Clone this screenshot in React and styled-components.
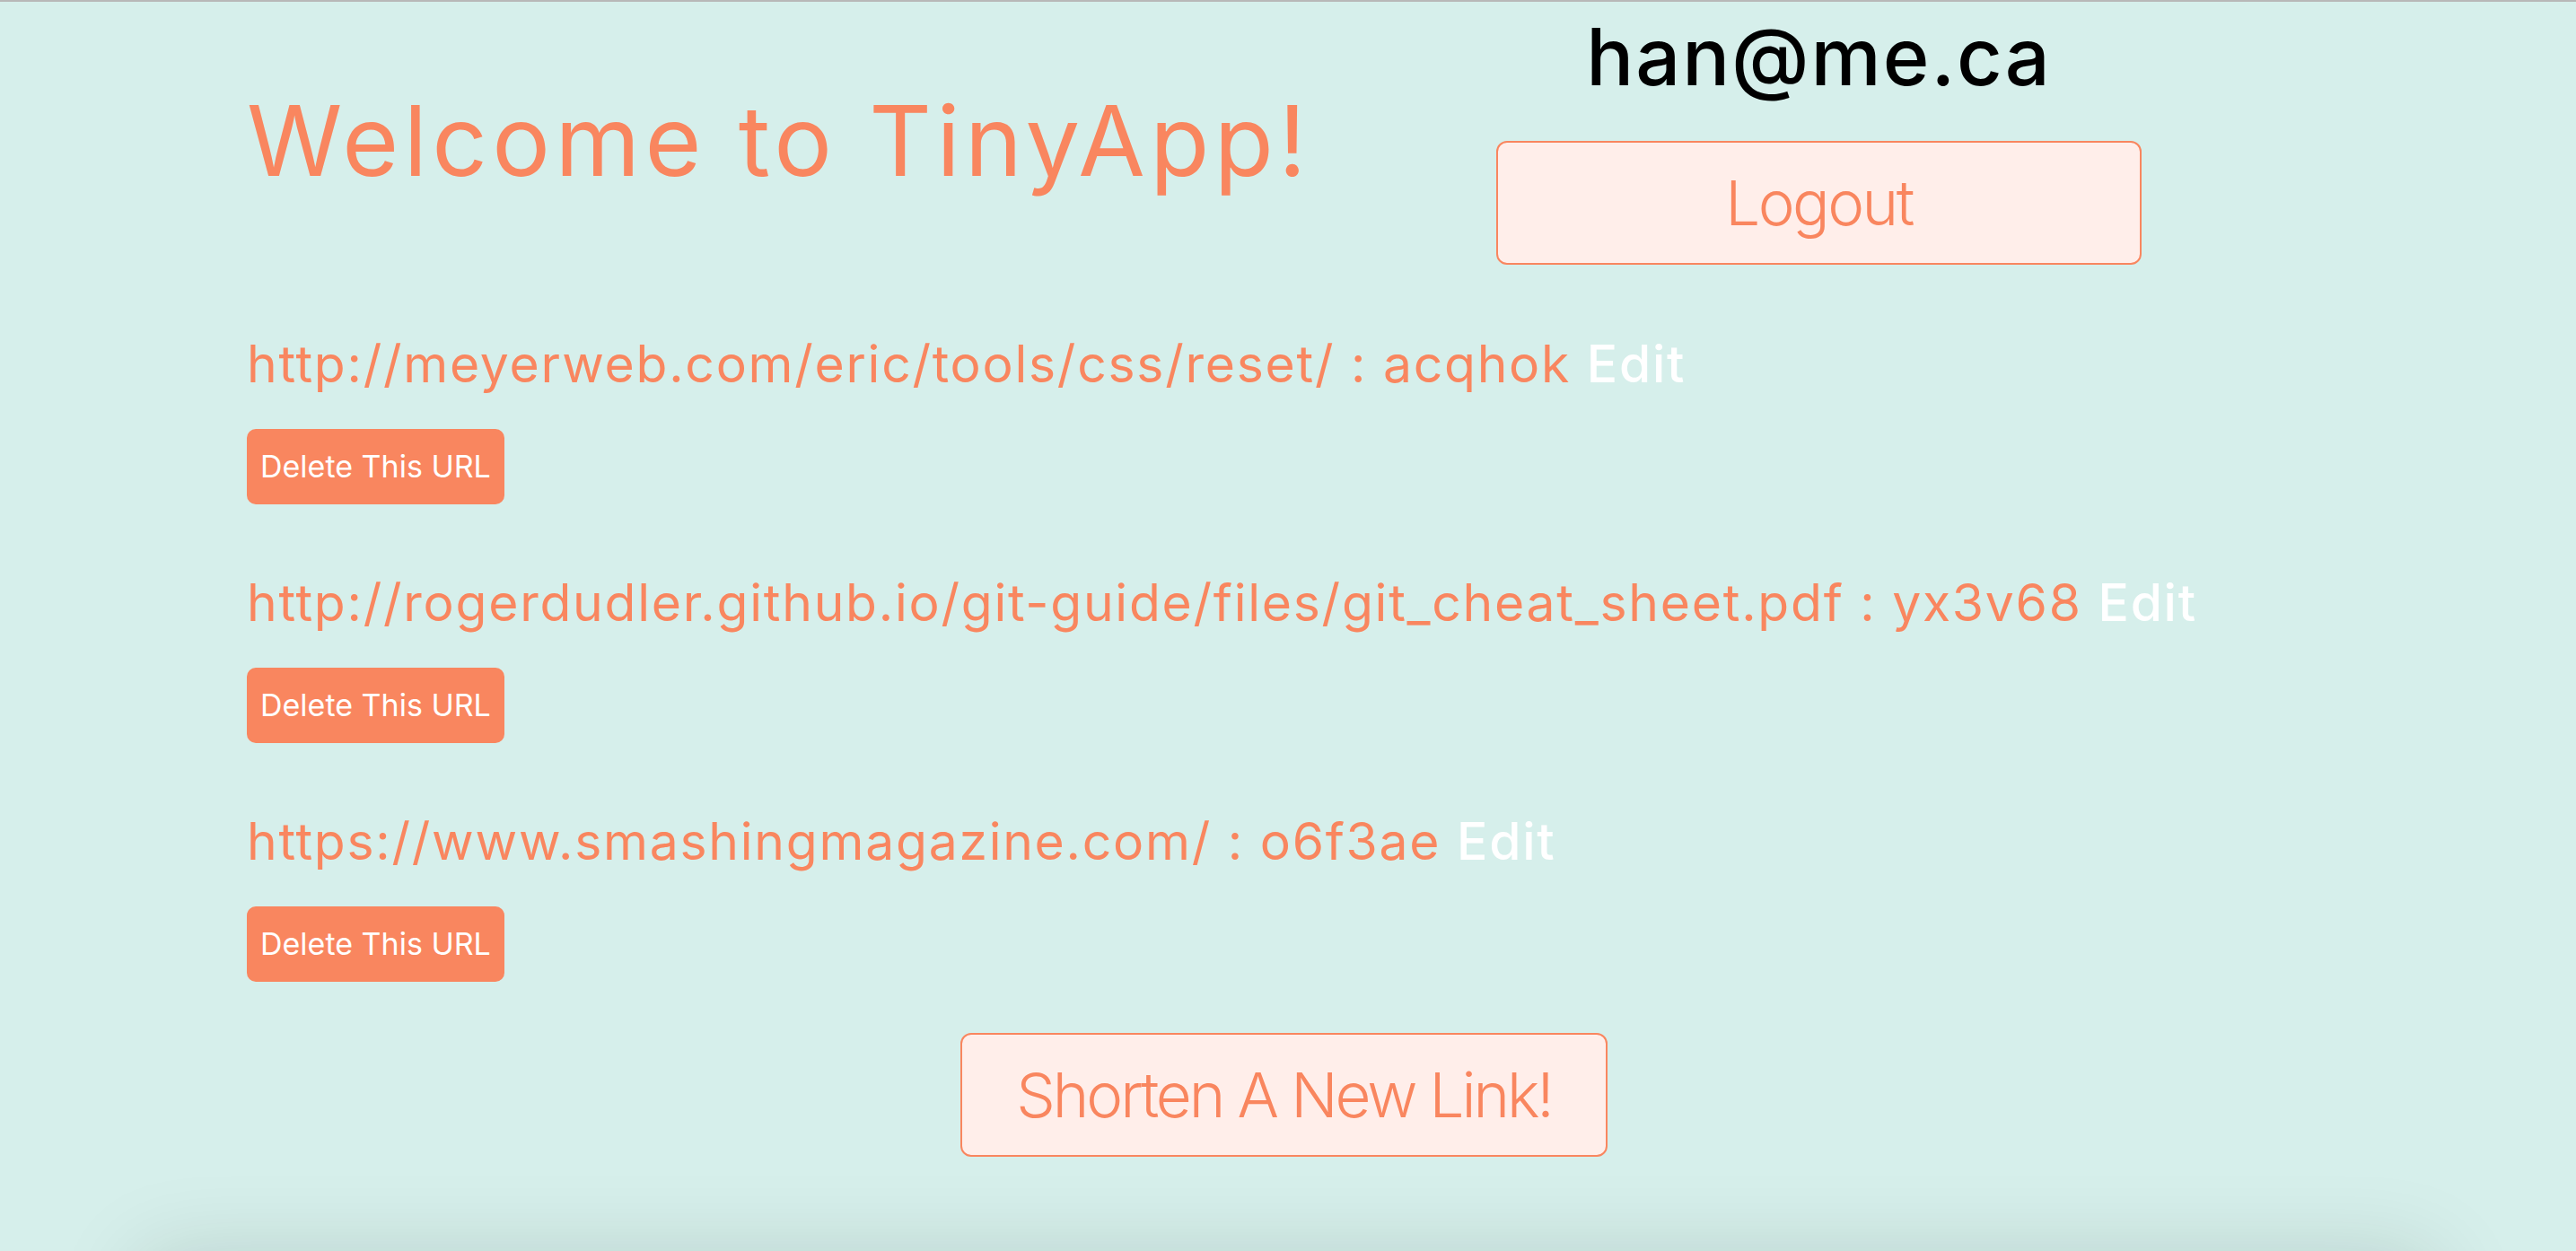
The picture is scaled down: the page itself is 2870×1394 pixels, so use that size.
import React from 'react';
import styled, { createGlobalStyle } from 'styled-components';

const coral = '#f9865f';
const blush = '#ffeeea';
const mint = '#d6efeb';

const GlobalStyle = createGlobalStyle`
  html, body {
    margin: 0;
    padding: 0;
    background: ${mint};
    font-family: Inter, "Noto Sans", sans-serif;
  }
`;

const Page = styled.div`
  min-height: 100vh;
  border-top: 2px solid #b8b8b8;
  overflow: hidden;
`;

const Header = styled.header`
  display: flex;
  justify-content: space-between;
  align-items: flex-start;
  padding: 0 484px 0 275px;
`;

const Title = styled.h1`
  margin: 101px 0 0;
  font-size: 108px;
  font-weight: 400;
  line-height: 1;
  letter-spacing: 5.4px;
  color: ${coral};
`;

const UserBox = styled.div`
  display: flex;
  flex-direction: column;
  align-items: center;
  width: 719px;
`;

const Email = styled.div`
  margin-top: 17px;
  font-size: 88px;
  font-weight: 500;
  line-height: 1;
  letter-spacing: 2px;
  color: #000;
`;

const OutlineButton = styled.button`
  display: flex;
  align-items: center;
  justify-content: center;
  box-sizing: border-box;
  width: ${({ $width }) => $width}px;
  height: 138px;
  margin-top: ${({ $top }) => $top}px;
  padding: 0;
  border: 2px solid ${coral};
  border-radius: 12px;
  background: ${blush};
  color: ${coral};
  font-family: Inter, sans-serif;
  font-size: 69px;
  font-weight: 300;
  line-height: 1;
  letter-spacing: ${({ $spacing }) => $spacing}px;
  cursor: pointer;
`;

const UrlList = styled.main`
  display: flex;
  flex-direction: column;
  padding: 82px 0 0 275px;
  gap: 81px;
`;

const UrlRow = styled.div`
  display: flex;
  flex-direction: column;
  align-items: flex-start;
`;

const UrlLine = styled.div`
  font-size: 57px;
  line-height: 1;
  letter-spacing: 1.75px;
  color: ${coral};
  white-space: nowrap;
`;

const EditLink = styled.a`
  color: #fff;
  font-weight: 500;
  text-decoration: none;
`;

const DeleteButton = styled.button`
  margin-top: 44px;
  height: 84px;
  padding: 0 15px;
  border: none;
  border-radius: 10px;
  background: ${coral};
  color: #fff;
  font-family: Inter, sans-serif;
  font-size: 34px;
  line-height: 1;
  cursor: pointer;
`;

const Actions = styled.div`
  display: flex;
  justify-content: center;
  padding-right: 9px;
`;

const Footer = styled.footer`
  height: 200px;
  margin: 115px 160px 0;
  background: ${mint};
  box-shadow: 0 0 100px rgba(0, 30, 20, 0.16);
`;

const urls = [
  { long: 'http://meyerweb.com/eric/tools/css/reset/', short: 'acqhok' },
  { long: 'http://rogerdudler.github.io/git-guide/files/git_cheat_sheet.pdf', short: 'yx3v68' },
  { long: 'https://www.smashingmagazine.com/', short: 'o6f3ae' },
];

const App = () => (
  <Page>
    <GlobalStyle />
    <Header>
      <Title>Welcome to TinyApp!</Title>
      <UserBox>
        <Email>han@me.ca</Email>
        <OutlineButton $width={719} $top={50} $spacing={-2.5}>Logout</OutlineButton>
      </UserBox>
    </Header>
    <UrlList>
      {urls.map((u) => (
        <UrlRow key={u.short}>
          <UrlLine>
            {u.long} : {u.short} <EditLink href="#">Edit</EditLink>
          </UrlLine>
          <DeleteButton>Delete This URL</DeleteButton>
        </UrlRow>
      ))}
    </UrlList>
    <Actions>
      <OutlineButton $width={721} $top={57} $spacing={-3.1}>Shorten A New Link!</OutlineButton>
    </Actions>
    <Footer />
  </Page>
);

export default App;
